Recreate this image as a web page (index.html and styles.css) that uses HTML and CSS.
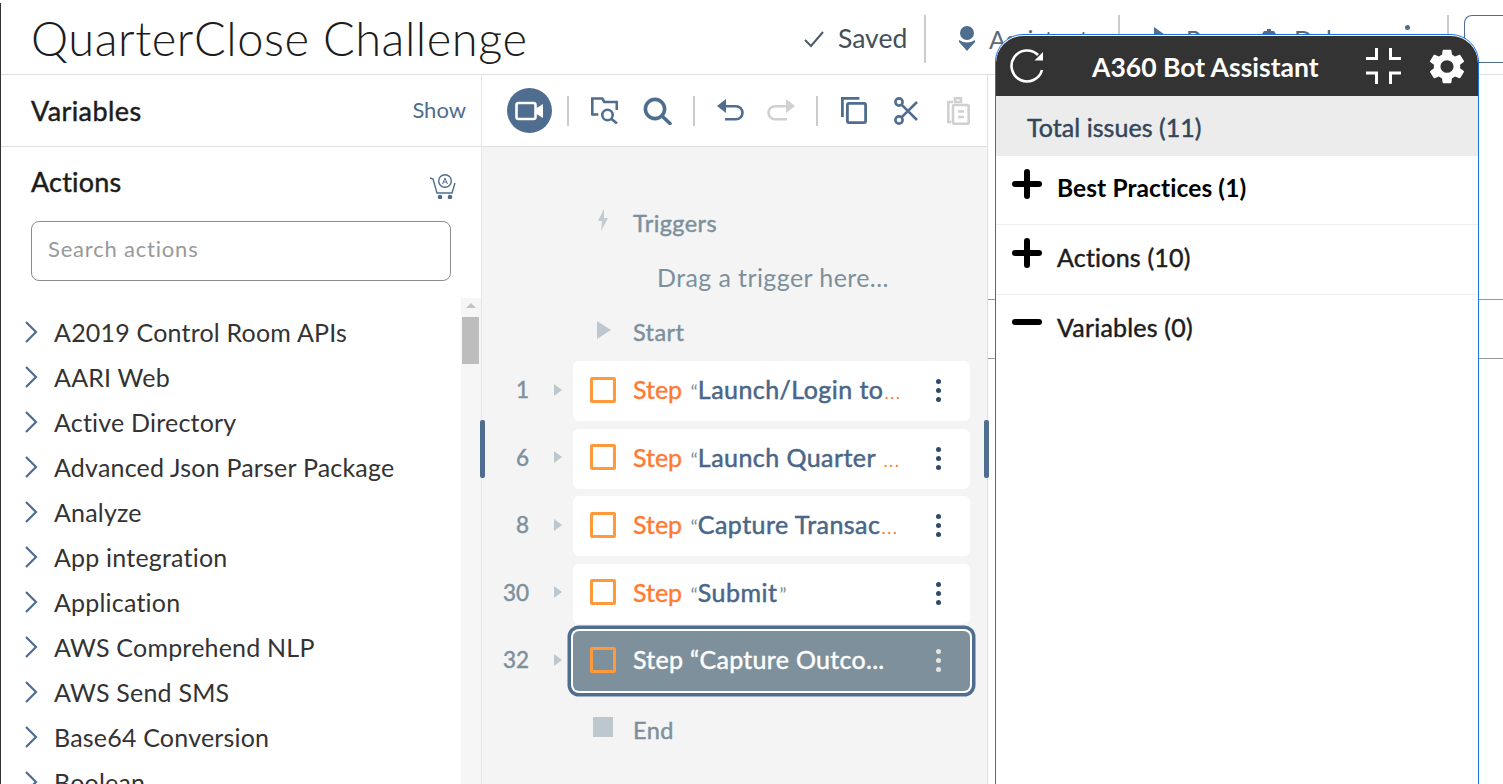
FILE: index.html
```html
<!DOCTYPE html>
<html lang="en">
<head>
<meta charset="utf-8">
<title>QuarterClose Challenge</title>
<link rel="stylesheet" href="styles.css">
</head>
<body>
<div class="app">
  <header class="topbar">
    <h1 class="title">QuarterClose Challenge</h1>
    <div class="top-actions">
      <svg class="saved-check" width="22" height="18" viewBox="0 0 22 18"><path d="M2 10l6 6L20 2" fill="none" stroke="#4a5a66" stroke-width="2"/></svg>
      <span class="saved">Saved</span>
      <span class="top-div"></span>
      <svg class="ta-icon" width="20" height="28" viewBox="0 0 20 28"><circle cx="10" cy="8" r="7" fill="#4f6d8f"/><path d="M2 15q8 5 16 0v2l-8 9-8-9z" fill="#4f6d8f"/></svg>
      <span class="ta-label ta-assistant">Assistant</span>
      <span class="top-div"></span>
      <svg class="ta-icon ta-run" width="16" height="22" viewBox="0 0 16 22"><path d="M1 1l14 10L1 21z" fill="#4f6d8f"/></svg>
      <span class="ta-label ta-runl">Run</span>
      <svg class="ta-icon ta-debug" width="20" height="24" viewBox="0 0 20 24"><path d="M8 2h4v2h3l2 3H3l2-3h3z" fill="#4f6d8f"/><circle cx="10" cy="14" r="8" fill="#4f6d8f"/></svg>
      <span class="ta-label ta-debugl">Debug</span>
      <span class="ta-dot"></span>
      <span class="top-div top-div-last"></span>
      <span class="top-box"></span>
    </div>
  </header>
  <main class="workspace">
    <aside class="left">
      <div class="vars-row"><strong class="vars-title">Variables</strong><span class="show">Show</span></div>
      <div class="actions-head">
        <strong class="actions-title">Actions</strong>
        <svg class="cart" width="28" height="25" viewBox="0 0 28 25" fill="none" stroke="#4f6d8f" stroke-width="1.4"><path d="M1 4l3 1 4 14h15l3-10"/><circle cx="16" cy="7" r="6.3"/><path d="M13.5 10l2.5-6 2.5 6M14.3 8h3.4" stroke-width="1"/><circle cx="11" cy="23" r="1.6" fill="#4f6d8f"/><circle cx="21" cy="23" r="1.6" fill="#4f6d8f"/></svg>
      </div>
      <div class="search"><span class="search-ph">Search actions</span></div>
      <div class="list-wrap">
        <ul class="list">
          <li><svg class="chev" width="14" height="22" viewBox="0 0 14 22"><path d="M2 1l10 10L2 21" fill="none" stroke="#4f6d8f" stroke-width="2.2"/></svg>A2019 Control Room APIs</li>
          <li><svg class="chev" width="14" height="22" viewBox="0 0 14 22"><path d="M2 1l10 10L2 21" fill="none" stroke="#4f6d8f" stroke-width="2.2"/></svg>AARI Web</li>
          <li><svg class="chev" width="14" height="22" viewBox="0 0 14 22"><path d="M2 1l10 10L2 21" fill="none" stroke="#4f6d8f" stroke-width="2.2"/></svg>Active Directory</li>
          <li><svg class="chev" width="14" height="22" viewBox="0 0 14 22"><path d="M2 1l10 10L2 21" fill="none" stroke="#4f6d8f" stroke-width="2.2"/></svg>Advanced Json Parser Package</li>
          <li><svg class="chev" width="14" height="22" viewBox="0 0 14 22"><path d="M2 1l10 10L2 21" fill="none" stroke="#4f6d8f" stroke-width="2.2"/></svg>Analyze</li>
          <li><svg class="chev" width="14" height="22" viewBox="0 0 14 22"><path d="M2 1l10 10L2 21" fill="none" stroke="#4f6d8f" stroke-width="2.2"/></svg>App integration</li>
          <li><svg class="chev" width="14" height="22" viewBox="0 0 14 22"><path d="M2 1l10 10L2 21" fill="none" stroke="#4f6d8f" stroke-width="2.2"/></svg>Application</li>
          <li><svg class="chev" width="14" height="22" viewBox="0 0 14 22"><path d="M2 1l10 10L2 21" fill="none" stroke="#4f6d8f" stroke-width="2.2"/></svg>AWS Comprehend NLP</li>
          <li><svg class="chev" width="14" height="22" viewBox="0 0 14 22"><path d="M2 1l10 10L2 21" fill="none" stroke="#4f6d8f" stroke-width="2.2"/></svg>AWS Send SMS</li>
          <li><svg class="chev" width="14" height="22" viewBox="0 0 14 22"><path d="M2 1l10 10L2 21" fill="none" stroke="#4f6d8f" stroke-width="2.2"/></svg>Base64 Conversion</li>
          <li><svg class="chev" width="14" height="22" viewBox="0 0 14 22"><path d="M2 1l10 10L2 21" fill="none" stroke="#4f6d8f" stroke-width="2.2"/></svg>Boolean</li>
        </ul>
        <div class="scroll"><span class="scroll-up"></span><span class="scroll-thumb"></span></div>
      </div>
    </aside>
    <section class="center">
      <span class="handle handle-l"></span>
      <span class="handle handle-r"></span>
      <div class="toolbar">
        <span class="rec"><svg width="30" height="20" viewBox="0 0 30 20" fill="none" stroke="#fff" stroke-width="2.6"><rect x="1.5" y="2" width="19" height="16" rx="2"/><path d="M20 8l8-5v14l-8-5z" fill="#fff" stroke="none"/></svg></span>
        <span class="tb-div"></span>
        <svg class="tb i-folder" width="27" height="27" viewBox="0 0 27 27" fill="none" stroke="#4f6d8f" stroke-width="2.6"><path d="M1.3 18.5V1.5h10l2 3.5h12.5v8"/><path d="M1.3 17.5h6"/><circle cx="16.5" cy="18" r="5.2"/><path d="M20.5 22l5.5 4.5"/></svg>
        <svg class="tb i-search" width="29" height="28" viewBox="0 0 29 28" fill="none" stroke="#4f6d8f" stroke-width="3.6"><circle cx="12" cy="12" r="9.6"/><path d="M19 19l8 7.5" stroke-linecap="round"/></svg>
        <span class="tb-div tb-div-b"></span>
        <svg class="tb i-undo" width="27" height="22" viewBox="0 0 27 22" fill="none" stroke="#4f6d8f" stroke-width="2.6"><path d="M7 7.3h12a6 6 0 0 1 0 13H8"/><path d="M9 0L0 7l9 7z" fill="#4f6d8f" stroke="none"/></svg>
        <svg class="tb i-redo" width="28" height="22" viewBox="0 0 28 22" fill="none" stroke="#d0d0d0" stroke-width="2.6"><path d="M21 7.3H8a6 6 0 0 0 0 13h12"/><path d="M19 0l9 7-9 7z" fill="#d0d0d0" stroke="none"/></svg>
        <span class="tb-div tb-div-b"></span>
        <svg class="tb i-copy" width="26" height="27" viewBox="0 0 26 27" fill="none" stroke="#4f6d8f" stroke-width="2.8"><path d="M1.4 20V1.4h17"/><rect x="6.4" y="6.4" width="18.2" height="19.2" rx="1.5"/></svg>
        <svg class="tb i-cut" width="24" height="28" viewBox="0 0 24 28" fill="none" stroke="#4f6d8f" stroke-width="2.6"><circle cx="5" cy="5" r="3.6"/><circle cx="5" cy="23" r="3.6"/><path d="M7.5 7.6L23 23M7.5 20.4L23 5"/></svg>
        <svg class="tb i-paste" width="23" height="28" viewBox="0 0 23 28" fill="none" stroke="#d0d0d0" stroke-width="2.6"><path d="M6 5H1.3v20h3"/><path d="M8 1.3h6V5H8z"/><rect x="6" y="8" width="15.7" height="18.7" rx="1.5"/><path d="M11 14.5h6M11 20h6"/></svg>
      </div>
      <div class="flow">
        <div class="marker marker-trig"><svg class="m-ico-t" width="12" height="22" viewBox="0 0 12 22"><path d="M7 0L1 12h4l-1 10 7-13H7z" fill="#c0cbd0"/></svg><span class="marker-label">Triggers</span></div>
        <div class="drag">Drag a trigger here...</div>
        <div class="marker marker-start"><svg class="m-ico-s" width="14" height="18" viewBox="0 0 14 18"><path d="M0 0l14 9L0 18z" fill="#bcc8cd"/></svg><span class="marker-label">Start</span></div>
        <div class="steps">
          <div class="step"><span class="num">1</span><span class="tri"></span><div class="card"><span class="box"></span><span class="lbl"><span class="st">Step</span> <span class="q">“</span><span class="nm">Launch/Login to</span><span class="el">...</span></span><span class="kebab"><i></i><i></i><i></i></span></div></div>
          <div class="step"><span class="num">6</span><span class="tri"></span><div class="card"><span class="box"></span><span class="lbl"><span class="st">Step</span> <span class="q">“</span><span class="nm">Launch Quarter </span><span class="el">...</span></span><span class="kebab"><i></i><i></i><i></i></span></div></div>
          <div class="step"><span class="num">8</span><span class="tri"></span><div class="card"><span class="box"></span><span class="lbl"><span class="st">Step</span> <span class="q">“</span><span class="nm">Capture Transac</span><span class="el">...</span></span><span class="kebab"><i></i><i></i><i></i></span></div></div>
          <div class="step"><span class="num">30</span><span class="tri"></span><div class="card"><span class="box"></span><span class="lbl"><span class="st">Step</span> <span class="q">“</span><span class="nm">Submit</span><span class="q">”</span></span><span class="kebab"><i></i><i></i><i></i></span></div></div>
          <div class="step step-sel"><span class="num">32</span><span class="tri"></span><div class="card card-sel"><span class="box"></span><span class="lbl">Step “Capture Outco...</span><span class="kebab"><i></i><i></i><i></i></span></div></div>
        </div>
        <div class="marker marker-end"><span class="end-sq"></span><span class="marker-label">End</span></div>
      </div>
    </section>
    <aside class="right">
      <span class="right-line right-line-a"></span>
      <span class="right-line"></span>
    </aside>
  </main>
  <section class="assistant">
    <div class="as-head">
      <svg class="as-refresh" width="36" height="36" viewBox="0 0 36 36" fill="none" stroke="#fff" stroke-width="2.6"><path d="M32 22a15.5 15.5 0 1 1-4-15"/><path d="M33 4v8.5h-8.5z" fill="#fff" stroke="none"/></svg>
      <span class="as-title">A360 Bot Assistant</span>
      <svg class="as-shrink" width="36" height="36" viewBox="0 0 36 36" fill="none" stroke="#fff" stroke-width="3"><path d="M10.5 0v10.5H0M24.5 0v10.5H35M10.5 36V25H0M24.5 36V25H35"/></svg>
      <svg class="as-gear" width="34" height="35" viewBox="2.7 2 18.6 20" preserveAspectRatio="none"><path fill="#fff" d="M19.14 12.94c.04-.3.06-.61.06-.94 0-.32-.02-.64-.07-.94l2.03-1.58a.49.49 0 0 0 .12-.61l-1.92-3.32a.488.488 0 0 0-.59-.22l-2.39.96c-.5-.38-1.03-.7-1.62-.94l-.36-2.54a.484.484 0 0 0-.48-.41h-3.84c-.24 0-.43.17-.47.41l-.36 2.54c-.59.24-1.13.57-1.62.94l-2.39-.96c-.22-.08-.47 0-.59.22L2.74 8.87c-.12.21-.08.47.12.61l2.03 1.58c-.05.3-.09.63-.09.94s.02.64.07.94l-2.03 1.58a.49.49 0 0 0-.12.61l1.92 3.32c.12.22.37.29.59.22l2.39-.96c.5.38 1.03.7 1.62.94l.36 2.54c.05.24.24.41.48.41h3.84c.24 0 .44-.17.47-.41l.36-2.54c.59-.24 1.13-.56 1.62-.94l2.39.96c.22.08.47 0 .59-.22l1.92-3.32c.12-.22.07-.47-.12-.61l-2.01-1.58zM12 15.6A3.6 3.6 0 1 1 12 8.4a3.6 3.6 0 0 1 0 7.2z"/></svg>
    </div>
    <div class="as-total">Total issues (11)</div>
    <div class="as-row as-row-bp"><span class="pm"><i class="h"></i><i class="v"></i></span><span class="as-t as-t-strong">Best Practices (1)</span></div>
    <div class="as-row"><span class="pm"><i class="h"></i><i class="v"></i></span><span class="as-t">Actions (10)</span></div>
    <div class="as-row as-row-last"><span class="pm pm-minus"><i class="h"></i></span><span class="as-t">Variables (0)</span></div>
  </section>
</div>
</body>
</html>
```

FILE: styles.css
```css
* { box-sizing: border-box; }
html, body { margin: 0; padding: 0; height: 100%; overflow: hidden; background: #fff; }
body { font-family: "Lato", "Noto Sans", sans-serif; color: #333; }

.app { position: relative; width: 1503px; height: 784px; border-top: 3px solid #fff; overflow: hidden; display: flex; flex-direction: column; }
.app::before { content: ""; position: absolute; left: 0; right: 0; top: -1px; height: 1px; background: #ccc; }
.app::after { content: ""; position: absolute; left: 0; top: 0; bottom: 0; width: 1px; background: #333; }

.topbar { height: 72px; border-bottom: 1px solid #ddd; display: flex; align-items: center; padding-left: 31px; flex: none; }
.title { margin: 0; font-size: 47px; font-weight: 300; color: #1c1c1c; letter-spacing: 0.55px; line-height: 1; }
.top-actions { margin-left: auto; display: flex; align-items: center; height: 48px; }
.saved-check { margin-right: 13px; margin-left: 1px; flex: none; }
.saved { font-size: 26.5px; color: #444f58; width: 70px; margin-right: 16px; margin-top: -2px; }
.top-div { width: 2px; height: 48px; background: #ccc; flex: none; }
.ta-icon { margin-left: 31px; flex: none; }
.ta-label { font-size: 25px; color: #5a6a78; flex: none; }
.ta-assistant { margin-left: 12px; width: 129px; }
.ta-run { margin-left: 33px; margin-top: -4px; }
.ta-runl { margin-left: 17px; width: 50px; }
.ta-debug { margin-left: 23px; }
.ta-debugl { margin-left: 15px; width: 99px; }
.ta-dot { width: 5px; height: 5px; border-radius: 50%; background: #4f6d8f; margin: -22px 0 0 12px; flex: none; }
.top-div-last { margin-left: 37px; }
.top-box { width: 39px; height: 48px; margin-left: 15px; border: 1px solid #4f6d8f; border-right: 0; border-radius: 8px 0 0 8px; flex: none; }

.workspace { flex: 1; display: flex; min-height: 0; }
.left { width: 482px; flex: none; border-right: 1px solid #e5e5e5; display: flex; flex-direction: column; }
.vars-row { height: 72px; border-bottom: 1px solid #ddd; display: flex; align-items: center; justify-content: space-between; padding: 0 15px 0 31px; flex: none; }
.vars-title { font-size: 27px; font-weight: 400; letter-spacing: 0.4px; -webkit-text-stroke: 0.45px #1c1c1c; color: #1c1c1c; }
.show { font-size: 22px; color: #4f6d8f; margin-top: -2px; }
.actions-head { display: flex; align-items: center; justify-content: space-between; padding: 0 24px 5px 31px; height: 74px; flex: none; }
.actions-title { font-size: 27px; font-weight: 400; letter-spacing: 0.2px; -webkit-text-stroke: 0.45px #1c1c1c; color: #1c1c1c; }
.cart { margin-top: 10px; }
.search { margin: 0 30px 0 31px; height: 60px; border: 1px solid #8c8c8c; border-radius: 8px; padding: 0 0 5px 16px; display: flex; align-items: center; flex: none; }
.search-ph { font-size: 22px; letter-spacing: 0.8px; color: #999; }
.list-wrap { flex: 1; display: flex; min-height: 0; margin-top: 17px; overflow: hidden; }
.list { list-style: none; margin: 11px 0 0; padding: 0; flex: 1; }
.list li { height: 45px; display: flex; align-items: center; font-size: 25px; letter-spacing: 0.2px; color: #333; white-space: nowrap; }
.chev { margin: 0 16px 0 24px; flex: none; }
.scroll { width: 20px; flex: none; background: #f6f6f6; padding: 5px 2px 0 1px; display: flex; flex-direction: column; align-items: center; }
.scroll-up { width: 0; height: 0; border: 5px solid transparent; border-top: 0; border-bottom: 5px solid #c4c4c4; }
.scroll-thumb { width: 17px; height: 47px; margin-top: 9px; background: #bdbdbd; flex: none; }

.center { position: relative; width: 506px; flex: none; background: #f4f4f4; border-right: 1px solid #e0e0e0; display: flex; flex-direction: column; }
.handle { position: absolute; top: 345px; width: 5px; height: 58px; background: #4f6d8f; border-radius: 2px; }
.handle-l { left: -2px; }
.handle-r { right: -2px; }
.toolbar { height: 72px; background: #fff; border-bottom: 1px solid #ddd; display: flex; align-items: center; flex: none; padding-left: 25px; }
.rec { width: 45px; height: 45px; border-radius: 50%; background: #4f6d8f; display: flex; align-items: center; justify-content: center; flex: none; }
.tb-div { width: 2px; height: 30px; background: #ccc; margin-left: 15px; flex: none; }
.tb-div-b { margin-left: 21px; }
.tb { flex: none; }
.i-folder { margin-left: 22px; }
.i-search { margin-left: 25px; }
.i-undo { margin-left: 22px; margin-top: -1px; }
.i-redo { margin-left: 23px; margin-top: -1px; }
.i-copy { margin-left: 23px; }
.i-cut { margin-left: 27px; }
.i-paste { margin-left: 29px; }

.flow { flex: 1; display: flex; flex-direction: column; min-height: 0; }
.marker { display: flex; align-items: center; height: 30px; font-size: 23.5px; font-weight: 400; letter-spacing: 0.4px; -webkit-text-stroke: 0.45px #7c909c; color: #7c909c; }
.marker-trig { margin-top: 61px; }
.m-ico-t { margin: -6px 24px 0 115px; flex: none; }
.drag { margin: 24px 0 0 175px; height: 30px; line-height: 30px; font-size: 25px; letter-spacing: 0.4px; color: #7c909c; }
.marker-start { margin-top: 25px; }
.m-ico-s { margin: -4px 22px 0 115px; flex: none; }
.steps { margin-top: 14px; display: flex; flex-direction: column; gap: 7.5px; }
.step { display: flex; align-items: center; height: 60px; }
.num { width: 47px; text-align: right; font-size: 22.5px; font-weight: 400; -webkit-text-stroke: 0.45px #7c909c; color: #7c909c; margin-top: -3px; }
.tri { width: 0; height: 0; margin: -3px 11px 0 25px; border-left: 8px solid #bcc8cd; border-top: 6px solid transparent; border-bottom: 6px solid transparent; }
.card { width: 397px; height: 60px; background: #fff; border-radius: 6px; display: flex; align-items: center; padding: 0 0 3px 17px; position: relative; }
.box { width: 26px; height: 26px; border: 3px solid #ff9a3c; border-radius: 2px; flex: none; margin-right: 17px; }
.lbl { font-size: 25px; font-weight: 400; white-space: nowrap; color: #4f6d8f; margin-top: -1px; }
.st { color: #ff7a33; -webkit-text-stroke: 0.4px #ff7a33; }
.q { color: #7c909c; font-size: 20px; margin-left: 2px; }
.nm { color: #4a6688; letter-spacing: 0.45px; -webkit-text-stroke: 0.5px #4a6688; }
.el { color: #ff7a33; font-size: 18px; font-weight: 400; letter-spacing: 1.4px; margin-left: 1px; }
.kebab { position: absolute; left: 363px; top: 18px; display: flex; flex-direction: column; gap: 4px; }
.kebab i { display: block; width: 5px; height: 5px; border-radius: 50%; background: #2e4a68; }
.card-sel { background: #7d909b; box-shadow: 0 0 0 2px #fff, 0 0 0 5.5px #4f6d8f; }
.card-sel .lbl { color: #fff; letter-spacing: 0.3px; -webkit-text-stroke: 0.45px #fff; }
.card-sel .kebab i { background: #e5e5e5; }
.marker-end { margin-top: 24px; }
.end-sq { width: 20px; height: 20px; background: #bcc8cd; margin: -6px 20px 0 111px; flex: none; }

.right { flex: 1; position: relative; display: flex; flex-direction: column; }
.right-line { display: block; height: 1px; background: #999; margin-top: 58px; }
.right-line-a { margin-top: 224px; }

.assistant { position: absolute; left: 995px; top: 31px; width: 484px; height: 760px; background: #fff; border: 1px solid #1a73e8; border-radius: 28px 28px 0 0; padding-top: 1px; overflow: hidden; display: flex; flex-direction: column; }
.as-head { height: 60px; background: #333; display: flex; align-items: center; position: relative; flex: none; border-radius: 27px 27px 0 0; padding-left: 14px; }
.as-refresh { flex: none; }
.as-title { margin: 2px 0 0 46px; font-size: 26.5px; font-weight: 700; color: #fff; width: 274px; flex: none; }
.as-shrink { flex: none; }
.as-gear { margin-left: 28px; flex: none; }
.as-total { height: 60px; background: #ececec; padding: 2px 0 0 31px; font-size: 25px; font-weight: 400; letter-spacing: 0.05px; -webkit-text-stroke: 0.45px #33465a; color: #33465a; display: flex; align-items: center; flex: none; }
.as-row { height: 69.5px; border-bottom: 1px solid #eee; display: flex; align-items: center; padding-left: 16px; flex: none; }
.as-row-bp { height: 69px; }
.as-row-last { border-bottom: 0; }
.pm { position: relative; width: 30px; height: 30px; margin-top: -12px; flex: none; }
.pm-minus { margin-top: -15px; }
.pm .h { position: absolute; left: 0; top: 12px; width: 30px; height: 6px; background: #000; border-radius: 3px; }
.pm .v { position: absolute; left: 12px; top: 0; width: 6px; height: 30px; background: #000; border-radius: 3px; }
.as-t { margin: -5px 0 0 15px; font-size: 25px; font-weight: 400; letter-spacing: 0.2px; -webkit-text-stroke: 0.45px #1c1c1c; color: #1c1c1c; }
.as-t-strong { font-size: 24.5px; font-weight: 700; letter-spacing: 0.1px; -webkit-text-stroke: 0; color: #000; }
```
